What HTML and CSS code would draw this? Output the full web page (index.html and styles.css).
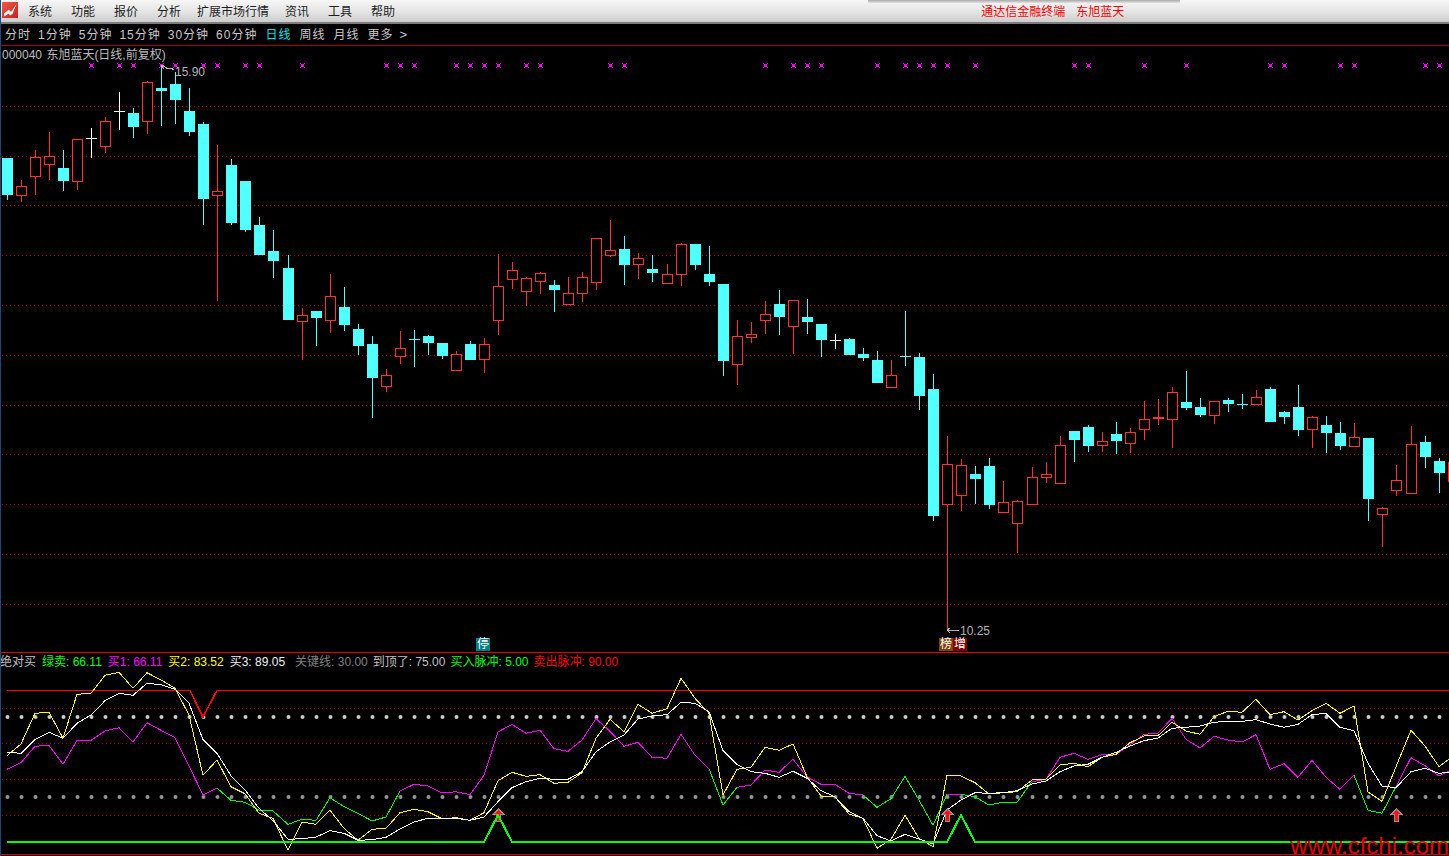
FILE: index.html
```html
<!DOCTYPE html>
<html lang="zh-CN">
<head>
<meta charset="utf-8">
<title>东旭蓝天</title>
<link rel="stylesheet" href="styles.css">
</head>
<body>
<div class="app">
  <header class="menubar">
    <svg class="logo" viewBox="0 0 16 16" width="16" height="16" aria-hidden="true">
      <defs><linearGradient id="lg" x1="0" y1="0" x2="1" y2="1"><stop offset="0" stop-color="#f25a4a"/><stop offset="1" stop-color="#c81e1e"/></linearGradient></defs>
      <rect width="16" height="16" fill="url(#lg)"/>
      <path d="M2 11.5 L7 7.5 L9 10 L14.5 2 L10.5 12 L8 13.5 L6.5 11.5 L2.5 14.5 Z" fill="#f4f4f4"/>
    </svg>
    <nav class="menu">
      <span>系统</span><span>功能</span><span>报价</span><span>分析</span><span class="menu-wide">扩展市场行情</span><span>资讯</span><span>工具</span><span>帮助</span>
    </nav>
    <div class="menu-title"><span>通达信金融终端</span><span>东旭蓝天</span></div>
    <div class="menu-shadow"></div>
  </header>
  <nav class="periods">
    <span>分时</span><span>1分钟</span><span>5分钟</span><span>15分钟</span><span>30分钟</span><span>60分钟</span><span class="is-active">日线</span><span class="late">周线</span><span class="late">月线</span><span class="late">更多</span><span class="more">&gt;</span>
  </nav>
  <section class="price-panel">
    <div class="chart-title">000040 东旭蓝天(日线,前复权)</div>
    <div class="canvas" id="price"></div>
    <span class="pin pin-high">15.90</span>
    <span class="pin pin-low">10.25</span>
    <span class="badge badge-stop">停</span>
    <span class="badge badge-rank">榜</span>
    <span class="badge badge-add">增</span>
  </section>
  <section class="ind-panel">
    <div class="canvas" id="ind"></div>
    <div class="legend">
      <span class="c-name">绝对买</span>
      <span class="c-green">绿卖: 66.11</span>
      <span class="c-magenta">买1: 66.11</span>
      <span class="c-yellow">买2: 83.52</span>
      <span class="c-white">买3: 89.05</span>
      <span class="c-gray">关键线: 30.00</span>
      <span class="c-silver">到顶了: 75.00</span>
      <span class="c-green">买入脉冲: 5.00</span>
      <span class="c-red">卖出脉冲: 90.00</span>
    </div>
    <span class="watermark">www.cfchi.com</span>
  </section>
</div>
<script src="chart.js"></script>
</body>
</html>
```
FILE: styles.css
```css
* { box-sizing: border-box; }
html, body { margin: 0; padding: 0; background: #000; }
body { width: 1449px; height: 856px; overflow: hidden; font-family: "Liberation Sans", "Noto Sans CJK SC", sans-serif; font-size: 12px; line-height: 14px; }
.app { width: 1449px; height: 856px; display: flex; flex-direction: column; overflow: hidden; border-left: 1px solid #1d4a78; }

.menubar { position: relative; height: 24px; margin-left: -1px; padding: 2px 0 0 2px; display: flex; align-items: flex-start; background: linear-gradient(#f6f6f6 0, #e6e6e6 50%, #cdcdcd 100%); border-bottom: 2px solid #7c7c7c; color: #1c1c1c; }
.logo { flex: none; display: block; }
.menu { display: flex; gap: 19px; margin-left: 10px; padding-top: 3px; }
.menu-wide { margin: 0 -3px; }
.menu-title { display: flex; gap: 11px; margin-left: 586px; padding-top: 3px; color: #f00; }
.menu-shadow { position: absolute; left: 868px; top: 0; width: 312px; height: 3px; background: linear-gradient(#a8a8a8, #e4e4e4); }

.periods { height: 22px; padding: 4px 0 0 4px; display: flex; gap: 7px; background: #000; border-bottom: 1px solid #a80000; color: #c8c8c8; letter-spacing: 1px; }
.periods .is-active { color: #00e4e4; margin-left: 1px; }
.periods .late { margin-left: 1px; }
.periods .more { margin-left: -1px; font-size: 13px; }

.price-panel { position: relative; height: 607px; background: #000; border-bottom: 1px solid #e00000; }
.chart-title { position: absolute; left: 1px; top: 2px; color: #bdbdbd; z-index: 1; white-space: nowrap; word-spacing: 1px; }
.canvas { position: absolute; left: -1px; top: 0; width: 1449px; height: 100%; }
.canvas svg { display: block; }
.pin { position: absolute; color: #b4b4b4; }
.pin-high { left: 174px; top: 19px; }
.pin-low { left: 959px; top: 578px; }
.badge { position: absolute; top: 592px; width: 14px; height: 13px; color: #fff; line-height: 13px; text-align: center; }
.badge-stop { left: 475px; background: #007f7f; }
.badge-rank { left: 938px; background: #804000; }
.badge-add { left: 952px; background: #800000; }

.ind-panel { position: relative; flex: 1; background: #000; overflow: hidden; }
.legend { position: absolute; left: -1px; top: 2px; display: flex; gap: 6px; white-space: nowrap; }
.legend .c-gray { margin-left: 4px; margin-right: -1px; }
.legend .c-silver { margin-right: -1px; }
.legend .c-green + .c-red { margin-left: -1px; }
.c-name { color: #c0c0c0; }
.c-green { color: #00ff00; }
.c-magenta { color: #ff00ff; }
.c-yellow { color: #ffff00; }
.c-white { color: #f2f2f2; }
.c-gray { color: #808080; }
.c-silver { color: #c0c0c0; }
.c-red { color: #ff0000; }
.watermark { position: absolute; right: 0; top: 183px; color: #e60000; font-size: 24px; line-height: 20px; white-space: nowrap; }
```
FILE: chart.js
```js
// candle index → screen x (the terminal rounds its 14px step up at four places)
function cx(i) {
  return 7 + 14 * (i - 1) + (i >= 21 ? 1 : 0) + (i >= 48 ? 1 : 0) + (i >= 74 ? 1 : 0) + (i >= 101 ? 1 : 0);
}

// type, high, low, body top, body bottom. c cyan, r red outline, s red solid, w white cross, d cyan cross
var candles = [
  ['c',158,200,158,195],['r',180,202,186,196],['r',150,195,157,177],['r',132,180,156,165],['c',150,191,168,181],
  ['r',139,190,139,182],['w',128,158,138,139],['r',117,153,121,147],['w',92,130,111,112],['c',108,138,113,127],
  ['r',81,134,82,122],['c',65,126,88,91],['c',72,124,84,100],['c',88,136,111,132],['c',122,225,124,199],
  ['r',145,301,191,196],['c',159,225,165,223],['c',181,232,181,230],['c',217,255,225,255],['c',230,278,251,261],
  ['c',255,320,268,320],['r',308,360,315,322],['c',311,346,311,318],['r',274,333,296,321],['c',287,331,307,325],
  ['c',324,355,329,346],['c',336,418,344,378],['r',369,392,375,387],['r',331,364,348,357],['d',330,367,339,340],
  ['c',335,355,336,343],['c',343,359,343,356],['r',351,371,354,371],['c',341,360,344,360],['r',338,373,344,360],
  ['r',254,335,286,321],['r',262,289,270,280],['r',277,306,278,292],['r',272,294,273,282],['c',280,312,285,290],
  ['r',277,305,293,305],['r',272,302,277,294],['r',238,290,238,283],['r',220,257,250,256],['c',236,285,249,265],
  ['r',253,279,258,265],['c',255,282,269,273],['r',264,284,274,284],['r',243,286,244,275],['c',244,270,244,265],
  ['c',246,286,274,282],['c',284,376,284,361],['r',320,385,336,365],['r',322,343,334,338],['r',301,334,314,321],
  ['c',290,335,304,317],['r',300,354,300,327],['c',299,334,317,322],['c',324,357,324,340],['w',334,349,340,341],
  ['c',338,355,339,355],['c',348,361,354,358],['c',351,383,360,383],['r',360,388,375,388],['d',311,366,356,357],
  ['c',353,410,357,396],['c',374,521,389,516],['r',436,630,464,505],['r',459,511,465,496],['c',466,504,474,479],
  ['c',458,509,466,505],['r',481,513,502,513],['r',500,553,501,524],['r',467,505,477,505],['r',462,483,474,478],
  ['r',436,484,445,484],['c',431,462,431,440],['c',425,452,427,446],['r',432,452,441,446],['c',422,454,434,441],
  ['r',428,453,432,444],['r',401,440,419,430],['s',399,425,417,419],['r',387,448,392,420],['c',371,410,402,408],
  ['c',398,417,407,415],['r',401,424,401,416],['c',398,412,400,404],['d',394,409,404,405],['r',390,405,397,405],
  ['c',387,422,389,422],['c',411,424,412,417],['c',385,436,407,430],['r',416,448,417,430],['c',416,453,425,433],
  ['c',422,450,433,446],['r',423,447,437,447],['c',438,521,438,499],['r',507,547,508,515],['r',465,496,480,491],
  ['r',426,494,444,494],['c',436,468,442,457],['c',458,493,461,473],['r',458,482,462,482]
];

var white = [247,250,209,187,205,160,135,92,70,76,40,44,58,100,209,250,317,360,415,452,508,506,501,482,490,511,509,502,477,456,445,447,445,451,441,
  395,353,335,325,328,328,305,245,216,195,147,138,134,97,100,125,242,283,305,310,322,304,325,362,380,425,445,497,513,493,507,522,420,390,
  368,370,368,362,342,333,305,288,283,262,247,228,212,204,175,172,168,157,154,154,149,162,172,163,134,130,172,182,280,348,353,305,295,310,305];
var yellow = [257,222,130,127,205,73,70,16,7,55,8,30,55,135,316,270,350,371,430,445,541,456,463,421,475,511,478,475,428,418,425,446,443,451,428,
  332,307,319,314,340,337,308,205,148,185,103,130,116,25,85,130,375,298,292,232,241,222,320,378,380,432,445,535,508,436,505,530,316,318,
  338,372,368,365,330,328,285,280,290,262,253,218,198,197,157,183,193,140,124,127,88,134,125,150,122,100,130,108,366,394,290,181,228,290,258];
var buy1 = [298,278,229,226,283,211,211,183,173,216,158,181,203,288,375,354,391,397,420,423,463,448,451,383,410,430,453,441,363,343,348,369,365,374,316,
  186,163,190,181,236,244,210,146,184,229,217,262,265,193,256,296,405,352,345,300,307,268,320,343,343,370,375,412,386,319,390,466,373,373,
  380,405,397,397,335,328,262,250,268,254,253,225,193,190,145,208,234,199,210,216,194,298,281,322,271,322,358,316,421,430,350,263,287,318,297];
var greenRuns = [[16,29],[51,53],[62,68],[69,74],[97,100]];

// signal marks sit on candle columns
var marks = [91,119,133,161,175,203,217,245,259,302,386,400,414,456,470,484,498,526,540,610,624,765,793,807,821,877,905,919,933,947,975,1074,1088,1144,1186,1270,1284,1340,1354,1425,1439];

function zy(v) { return (670 + v / 3).toFixed(1); }
function line(x1, y1, x2, y2, color, extra) {
  return '<line x1="' + x1 + '" y1="' + y1 + '" x2="' + x2 + '" y2="' + y2 + '" stroke="' + color + '"' + (extra || '') + '/>';
}
function dotted(y, color) {
  return line(2, y + 0.5, 1449, y + 0.5, color, ' stroke-dasharray="1 3"');
}
function poly(pts, color, width) {
  return '<polyline fill="none" stroke="' + color + '" stroke-width="' + (width || 1) + '" points="' + pts + '"/>';
}
function pts(arr, from, to) {
  var s = [];
  for (var i = from; i <= to; i++) s.push(cx(i) + ',' + zy(arr[i - 1]));
  return s.join(' ');
}
function svg(top, h, body) {
  return '<svg width="1449" height="' + h + '" viewBox="0 ' + top + ' 1449 ' + h + '" shape-rendering="crispEdges">' + body + '</svg>';
}
// a 5×5 pixel cross with a solid centre
function cross(x, y) {
  var d = 'M' + (x - 1) + ' ' + y + 'h3v1h-3zM' + x + ' ' + (y - 1) + 'h1v3h-1z';
  for (var k = -2; k <= 2; k++) {
    d += 'M' + (x + k) + ' ' + (y + k) + 'h1v1h-1z';
    if (k) d += 'M' + (x + k) + ' ' + (y - k) + 'h1v1h-1z';
  }
  return '<path d="' + d + '" fill="#ff00ff"/>';
}

function drawPrice() {
  var o = '';
  [106,156,205,255,305,355,405,454,504,554,604].forEach(function (y) { o += dotted(y, '#b00000'); });
  marks.forEach(function (x) { o += cross(x, 65); });
  candles.forEach(function (c, n) {
    var x = cx(n + 1), t = c[0], hi = c[1], lo = c[2], top = c[3], bot = c[4], w = x + 0.5;
    var col = (t === 'c' || t === 'd') ? '#54ffff' : (t === 'w' ? '#ffffff' : '#ff3232');
    if (t === 'w' || t === 'd') {
      o += line(w, hi, w, lo, col) + '<rect x="' + (x - 5) + '" y="' + top + '" width="11" height="1" fill="' + col + '"/>';
      return;
    }
    if (hi < top) o += line(w, hi, w, top, col);
    if (lo > bot) o += line(w, bot, w, lo, col);
    if (t === 'r') {
      o += '<rect x="' + (x - 4.5) + '" y="' + (top + 0.5) + '" width="10" height="' + (bot - top - 1) + '" fill="#000" stroke="' + col + '"/>';
    } else {
      o += '<rect x="' + (x - 5) + '" y="' + top + '" width="11" height="' + (bot - top) + '" fill="' + col + '"/>';
    }
  });
  // arrows to the high and low labels
  o += poly('161,66 165,67 168,69 171,68 174,70', '#b4b4b4') + poly('164,65 161,66 164,69', '#b4b4b4');
  o += line(947, 630.5, 959, 630.5, '#b4b4b4') + poly('950,628 947,630 950,633', '#b4b4b4');
  document.getElementById('price').innerHTML = svg(46, 606, o);
}

function arrow(x) {
  var p = [[0,-6],[5,-1],[2,-1],[2,6],[-2,6],[-2,-1],[-5,-1]].map(function (d) { return (x + d[0] + 0.5) + ',' + (815 + d[1]); }).join(' ');
  return '<polygon points="' + p + '" fill="#ff1010" stroke="#a08888"/>';
}

function drawInd() {
  var o = '', i;
  [708,743,779,815].forEach(function (y) { o += dotted(y, '#900000'); });
  for (i = 1; i <= 104; i++) {
    o += '<circle cx="' + (cx(i) + 0.5) + '" cy="717" r="2" fill="#cccccc" shape-rendering="auto"/>';
    o += '<circle cx="' + (cx(i) + 0.5) + '" cy="797" r="2" fill="#969696" shape-rendering="auto"/>';
  }
  o += poly('7,690.5 190,690.5 203,717 217,690.5 1449,690.5', '#ff0000', 1.6);
  // 买1 turns green over the 绿卖 stretches
  var last = 1;
  greenRuns.forEach(function (r) {
    o += poly(pts(buy1, last, r[0]), '#ff00ff');
    o += poly(pts(buy1, r[0], r[1]), '#00ff00');
    last = r[1];
  });
  o += poly(pts(buy1, last, 104), '#ff00ff');
  o += poly(pts(yellow, 1, 104), '#ffff00');
  o += poly(pts(white, 1, 104), '#ffffff');
  o += arrow(498) + arrow(947) + arrow(1396);
  o += poly('7,842 484,842 498,815 512,842 947,842 961,815 975,842 1449,842', '#00ff00', 2);
  o += '<rect x="0" y="854" width="1449" height="1" fill="#d00000"/>';
  document.getElementById('ind').innerHTML = svg(653, 203, o);
}

drawPrice();
drawInd();
```
